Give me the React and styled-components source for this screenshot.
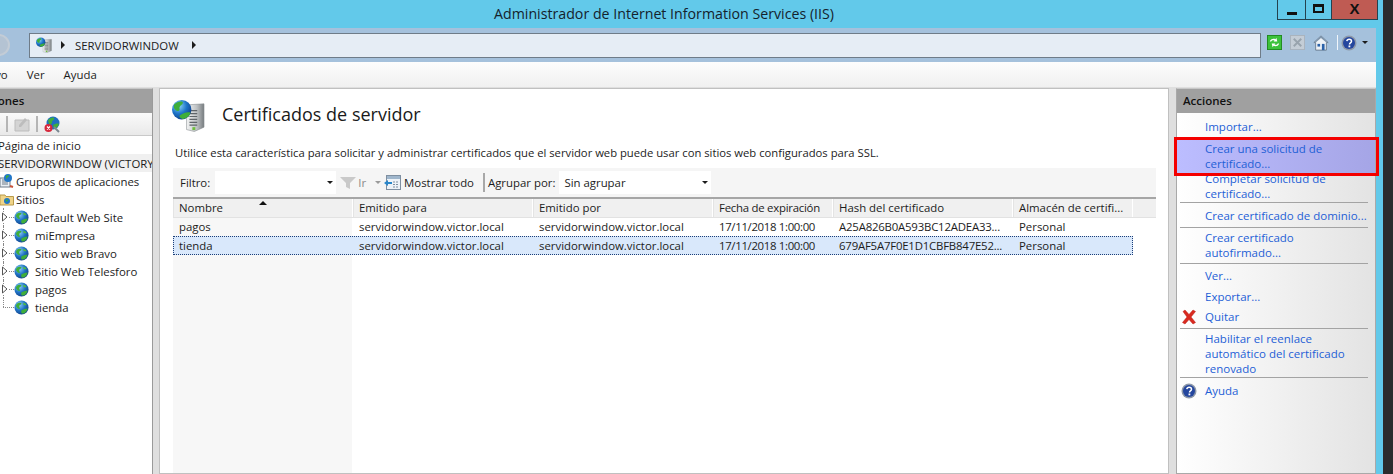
import React from 'react'
import styled, { createGlobalStyle } from 'styled-components'

const Global = createGlobalStyle`
  html, body { margin: 0; padding: 0; overflow: hidden; background: #2c2c2c; }
  * { box-sizing: border-box; }
  body { font-family: "Open Sans", "Noto Sans", sans-serif; font-size: 11.4px; color: #1c1c1c; }
`

const Globe = ({ size = 16, id = 'g' }) => (
  <svg width={size} height={size} viewBox="0 0 16 16">
    <defs>
      <radialGradient id={id} cx="35%" cy="30%" r="75%">
        <stop offset="0" stopColor="#8fd0f5" />
        <stop offset="0.55" stopColor="#1f72c4" />
        <stop offset="1" stopColor="#123f86" />
      </radialGradient>
    </defs>
    <circle cx="8" cy="8" r="7.5" fill={`url(#${id})`} />
    <path d="M3 4c2-1.500 4-1.500 5-.5 0 1.500-2 1.500-2.500 3S7 8.500 6 9.500 3 8 2 6.500zM8 11c2-1 4-2 6.500-2 -.5 3-3 5.500-5.500 5.500-1.500 0-1.500-2-1-3.500z" fill="#3fae3a" />
    <path d="M10 3c1.500 0 3 1 3.500 2.500-1 .5-2.500 0-3.500-.5z" fill="#4fbb45" />
  </svg>
)

const ServerGlobe = ({ size = 16, id = 'sg' }) => (
  <svg width={size} height={size} viewBox="0 0 34 34">
    <defs>
      <linearGradient id={`${id}b`} x1="0" x2="1" y1="0" y2="0">
        <stop offset="0" stopColor="#f4f5f5" />
        <stop offset="0.6" stopColor="#bcc0c2" />
        <stop offset="1" stopColor="#777c7f" />
      </linearGradient>
      <radialGradient id={`${id}g`} cx="35%" cy="30%" r="75%">
        <stop offset="0" stopColor="#8fd8f8" />
        <stop offset="0.55" stopColor="#1d74c8" />
        <stop offset="1" stopColor="#11408a" />
      </radialGradient>
    </defs>
    <path d="M15 6L33 5v24l-10 4.500-8-2z" fill={`url(#${id}b)`} stroke="#8a8f92" strokeWidth=".6" />
    <path d="M18 12h8M18 15h8M18 18h8M18 21h8M18 24h8M18 27h8" stroke="#5f6569" strokeWidth="1.200" />
    <rect x="21" y="29" width="3" height="3" fill="#6fbf3f" />
    <circle cx="10" cy="11" r="10" fill={`url(#${id}g)`} />
    <path d="M2 6c3-3 7-4 9-3 1 2-2 3-3 5s1 3-1 4-4-1-5-3zM8 17c3-2 7-4 11-3-1 4-4 6.500-8 6.500-2-.5-4-2-3-3.500z" fill="#3fae3a" />
  </svg>
)

const Caret = styled.span`
  width: 0;
  height: 0;
  flex: none;
  border-left: ${p => (p.$small ? 3 : 4)}px solid transparent;
  border-right: ${p => (p.$small ? 3 : 4)}px solid transparent;
  border-top: ${p => (p.$small ? 3 : 4)}px solid ${p => p.$color || '#1c1c1c'};
`

const BreadArrow = styled.span`
  width: 0;
  height: 0;
  flex: none;
  border-top: 4px solid transparent;
  border-bottom: 4px solid transparent;
  border-left: 4px solid #1c1c1c;
`

const Screen = styled.div`
  width: 1393px;
  height: 474px;
  display: flex;
  overflow: hidden;
  background: #2c2c2c;
`
const Win = styled.div`
  position: relative;
  width: 1383px;
  background: #62c9ea;
  display: flex;
  flex-direction: column;
  padding-right: 7px;
`
const TitleBar = styled.div`
  height: 28px;
  flex: none;
  padding-right: 48px;
  display: flex;
  align-items: center;
  justify-content: center;
  font-size: 14.2px;
  color: #14222c;
  padding-bottom: 2px;
`
const Caption = styled.div`
  position: absolute;
  top: 0;
  right: 5px;
  display: flex;
  height: 20px;
  border: 1px solid #24424f;
  border-top: 0;
`
const CapBtn = styled.div`
  width: ${p => p.$w}px;
  display: flex;
  align-items: center;
  justify-content: center;
  background: ${p => p.$bg || '#62c9ea'};
  border-left: ${p => (p.$first ? 0 : '1px solid #24424f')};
`
const MinGlyph = styled.span`
  width: 10px;
  height: 3px;
  background: #111;
  margin-top: 7px;
`
const MaxGlyph = styled.span`
  width: 11px;
  height: 9px;
  border: 2px solid #111;
  border-top-width: 3px;
  margin-top: -2px;
`
const CloseGlyph = styled.span`
  font-family: "Liberation Sans", sans-serif;
  font-weight: 700;
  font-size: 15px;
  line-height: 1;
  color: #111;
  margin-top: -3px;
`
const NavBar = styled.div`
  height: 34px;
  flex: none;
  background: #a5c1dc;
  display: flex;
  align-items: center;
  overflow: hidden;
`
const BackBall = styled.div`
  width: 22px;
  height: 22px;
  margin-left: -12px;
  margin-right: 19px;
  flex: none;
  border-radius: 50%;
  background: #b4c3d3;
  border: 2px solid #c3ccd6;
`
const Address = styled.div`
  width: 1232px;
  height: 25px;
  flex: none;
  background: #e6edf5;
  border: 1px solid #6f7c88;
  display: flex;
  align-items: center;
  padding-left: 6px;
  gap: 9px;
`
const AddressText = styled.span`
  font-size: 11.4px;
  margin: 0 4px 0 1px;
`
const NavTools = styled.div`
  display: flex;
  align-items: center;
  margin: -5px 0 0 6px;
`
const NavSlot = styled.span`
  display: flex;
  align-items: center;
  width: ${p => p.$w}px;
  flex: none;
  margin-right: ${p => p.$mr || 0}px;
`
const ToolDivider = styled.span`
  width: 1px;
  height: 15px;
  background: #f0f5fa;
`
const MenuBar = styled.div`
  height: 25px;
  flex: none;
  background: linear-gradient(#fdfdfd, #f0f0f0);
  display: flex;
  align-items: center;
  gap: 19px;
  margin-left: -32px;
`
const Panels = styled.div`
  flex: 1;
  min-height: 0;
  display: flex;
  background: #dfdfdf;
  padding-top: 1px;
`
const LeftPanel = styled.div`
  width: 153px;
  flex: none;
  border-right: 1px solid #9a9a9a;
  background: #fff;
  overflow: hidden;
  border-top: 1px solid #c8c8c8;
`
const PanelHead = styled.div`
  height: 24px;
  background: #a0a0a0;
  color: #111;
  font-weight: 600;
  font-size: 11.5px;
  line-height: 24px;
  padding-left: ${p => p.$pad || 0}px;
  text-indent: ${p => p.$indent || 0}px;
  white-space: nowrap;
`
const LeftTools = styled.div`
  height: 23px;
  background: linear-gradient(#fafafa, #e9e9e9);
  border-bottom: 1px solid #c9c9c9;
  display: flex;
  align-items: center;
  gap: 4px;
  margin-left: -16px;
`
const ToolSep = styled.span`
  width: 2px;
  height: 16px;
  background: #b5b5b5;
  margin: 0 2px;
`
const Tree = styled.div`
  margin-left: -20px;
  width: 172px;
`
const TreeRow = styled.div`
  height: 18px;
  display: flex;
  align-items: center;
  white-space: nowrap;
  padding-left: ${p => p.$pad}px;
  background: ${p => (p.$sel ? '#f0f0f0' : 'transparent')};
`
const SiteRow = styled(TreeRow)`
  position: relative;
  &::before {
    content: '';
    position: absolute;
    left: 23px;
    top: 0;
    height: ${p => (p.$last ? '50%' : '100%')};
    border-left: 1px dotted #888;
  }
`
const TreeLabel = styled.span`
  margin-left: ${p => p.$ml}px;
`
const ExpanderSvg = styled.svg`
  flex: none;
  position: relative;
  background: #fff;
  margin-right: 1px;
`
const Expander = () => (
  <ExpanderSvg width="6" height="10" viewBox="0 0 6 10">
    <path d="M.5 1v8L5 5z" fill="#fff" stroke="#555" />
  </ExpanderSvg>
)
const Dots = styled.span`
  width: ${p => p.$w}px;
  flex: none;
  border-top: 1px dotted #888;
`
const Center = styled.div`
  margin-left: 6px;
  width: 1010px;
  flex: none;
  background: #fff;
  border: 1px solid #c0c0c0;
  display: flex;
  flex-direction: column;
  padding: 0 12px 0 13px;
`
const Heading = styled.div`
  height: 53px;
  flex: none;
  display: flex;
  align-items: center;
  gap: 17px;
  margin-left: -1px;
`
const HeadingText = styled.h1`
  margin: -3px 0 0;
  font-size: 18px;
  font-weight: 400;
  color: #1a1a1a;
`
const Intro = styled.div`
  height: 26px;
  flex: none;
  padding: 3px 0 0 2px;
  white-space: nowrap;
  font-size: 11.25px;
`
const FilterBar = styled.div`
  height: 29px;
  flex: none;
  background: #f5f5f5;
  display: flex;
  align-items: center;
  padding-left: 7px;
`
const FilterLabel = styled.span`
  white-space: nowrap;
  color: ${p => (p.$muted ? '#8a8a8a' : 'inherit')};
  margin-left: ${p => p.$ml || 0}px;
`
const Spacer = styled.span`
  width: ${p => p.$w}px;
  flex: none;
`
const Combo = styled.div`
  width: ${p => p.$w}px;
  height: 23px;
  flex: none;
  margin-left: ${p => p.$ml}px;
  background: #fff;
  display: flex;
  align-items: center;
  justify-content: space-between;
  padding: 0 3px 0 5px;
`
const Divider = styled.span`
  width: 2px;
  height: 19px;
  background: #a8a8a8;
  margin: 0 3px 0 9px;
`
const HeadRow = styled.div`
  height: 21px;
  flex: none;
  display: flex;
  background: #f0f0f0;
  border-top: 2px solid #a6a6a6;
  border-bottom: 1px solid #e2e2e2;
`
const HeadCell = styled.div`
  width: ${p => p.$w}px;
  flex: none;
  padding-left: 5px;
  line-height: 18px;
  white-space: nowrap;
  letter-spacing: ${p => p.$ls || 0}px;
  border-right: 1px solid #fff;
  border-left: 1px solid #e4e4e4;
  position: relative;
`
const SortMark = styled.span`
  position: absolute;
  left: 85px;
  top: 2px;
  border-left: 4px solid transparent;
  border-right: 4px solid transparent;
  border-bottom: 4px solid #111;
`
const ListBody = styled.div`
  flex: 1;
  position: relative;
  background: linear-gradient(to right, #f7f7f7 179px, #fff 179px);
`
const Row = styled.div`
  height: ${p => (p.$sel ? 19 : 18)}px;
  width: 960px;
  display: flex;
  align-items: center;
  padding-bottom: ${p => (p.$sel ? 0 : 1)}px;
  background: ${p => (p.$sel ? '#d9e8fb' : 'transparent')};
  outline: ${p => (p.$sel ? '1px dotted #1c3f78' : 'none')};
  outline-offset: -1px;
`
const Cell = styled.div`
  width: ${p => p.$w}px;
  flex: none;
  padding-left: 6px;
  white-space: nowrap;
  overflow: hidden;
  letter-spacing: ${p => p.$ls || 0}px;
`
const RightPanel = styled.div`
  margin-left: 7px;
  width: 200px;
  flex: none;
  border: 1px solid #a9a9a9;
  border-top-color: #c8c8c8;
  background: linear-gradient(to right, #fff, #e3e3e3);
  position: relative;
  overflow: hidden;
`
const ActionList = styled.div`
  padding: 6px 7px 0 0;
`
const Action = styled.div`
  padding-left: 28px;
  line-height: 15px;
  margin-top: ${p => p.$mt || 0}px;
  color: #1f5fd6;
  position: relative;
  font-size: 11.5px;
  white-space: nowrap;
  background: ${p => (p.$hot ? 'linear-gradient(to right, #bcbdff, #a5a5e6)' : 'transparent')};
  margin-right: ${p => (p.$hot ? -7 : 0)}px;
  padding-top: ${p => (p.$hot ? 3 : 0)}px;
  padding-bottom: ${p => (p.$hot ? 3 : 0)}px;
`
const ActionIcon = styled.span`
  position: absolute;
  left: 4px;
  top: 0;
  display: flex;
`
const Rule = styled.div`
  height: 1px;
  background: #a3a3a3;
  margin: ${p => p.$t}px 0 ${p => p.$b}px 3px;
`
const RedBox = styled.div`
  position: absolute;
  left: 1174px;
  top: 137px;
  width: 205px;
  height: 39px;
  border: 3px solid #f40000;
  pointer-events: none;
`

const HelpIcon = ({ size = 16 }) => (
  <svg width={size} height={size} viewBox="0 0 16 16">
    <circle cx="8" cy="8" r="7.500" fill="#8d98a8" />
    <circle cx="8" cy="8" r="6" fill="#24469e" />
    <path d="M5.800 6.200C6 4.800 7 4.300 8.200 4.300c1.400 0 2.300.8 2.300 1.900 0 1.600-2 1.700-2 3.200" fill="none" stroke="#fff" strokeWidth="1.500" />
    <rect x="7.500" y="10.500" width="1.800" height="1.800" fill="#fff" />
  </svg>
)

const DeleteX = () => (
  <svg width="16" height="16" viewBox="0 0 16 16">
    <path d="M2 2.500L4 1l4 4.500L12 1l2.500 1.500L10 8l4.500 5.500L12 15 8 10.500 4 15l-2.500-1.500L6 8z" fill="#d92a20" stroke="#b81c14" strokeWidth=".5" />
  </svg>
)

const RefreshIcon = () => (
  <svg width="15" height="15" viewBox="0 0 16 16">
    <rect x=".5" y=".5" width="15" height="15" fill="#3cc23c" stroke="#1e8a1e" />
    <path d="M3 7c1-3 4-3.500 6-2.500L10 3l1 4-4 0 1-1c-1-.5-3-.5-3.500 1zM13 9c-1 3-4 3.500-6 2.500L6 13l-1-4 4 0-1 1c1 .5 3 .5 3.500-1z" fill="#fff" />
  </svg>
)

const StopIcon = () => (
  <svg width="15" height="15" viewBox="0 0 16 16">
    <rect x=".5" y=".5" width="15" height="15" fill="#c4cdd6" stroke="#a9b3bd" />
    <path d="M4 4l8 8M12 4l-8 8" stroke="#98a3ad" strokeWidth="2" />
  </svg>
)

const HomeIcon = () => (
  <svg width="16" height="16" viewBox="0 0 18 18">
    <path d="M9 1L1 8.500h2V17h12V8.500h2z" fill="#eef2f6" stroke="#5e6f80" strokeWidth=".9" />
    <path d="M9 1L1 8.500h2L9 3.500l6 5h2z" fill="#7d95ad" />
    <rect x="10" y="10" width="3" height="7" fill="#2b62a8" />
    <rect x="5" y="10" width="3" height="3" fill="#2b62a8" />
  </svg>
)

const Funnel = () => (
  <svg width="16" height="14" viewBox="0 0 16 14">
    <path d="M0 1h16l-6 6v6l-4-2V7z" fill="#c9c9c9" />
  </svg>
)

const ShowAllIcon = () => (
  <svg width="17" height="17" viewBox="0 0 17 17">
    <rect x="2.500" y="1.500" width="14" height="14" fill="#eef3f8" stroke="#7f8fa0" />
    <rect x="3" y="2" width="13" height="3" fill="#9fb6cc" />
    <path d="M9 8h6M9 10.500h6M9 13h6" stroke="#7f8fa0" strokeDasharray="2 1" />
    <path d="M0 9l4-3v2h4v2H4v2z" fill="#2a86c9" />
  </svg>
)

const DocIcon = () => (
  <svg width="16" height="16" viewBox="0 0 16 16">
    <path d="M1 4h14v11H1z" fill="#d4d4d4" stroke="#bcbcbc" />
    <path d="M5 9l6-7 2 2-6 7H5z" fill="#bdbdbd" />
  </svg>
)

const GlobeStop = () => (
  <svg width="17" height="17" viewBox="0 0 17 17">
    <circle cx="9" cy="7" r="6.500" fill="#1f6fc0" />
    <path d="M4 4c2-2 5-3 6-2 1 2-2 2-2 4s-2 3-3 2zM9 9c2-1 4-2 6-1-1 3-3 5-5 4.500z" fill="#3fae3a" />
    <path d="M10 11l5 5" stroke="#7a8791" strokeWidth="2" />
    <circle cx="4.500" cy="12" r="4" fill="#d6283c" />
    <path d="M3 10.500l3 3M6 10.500l-3 3" stroke="#fff" strokeWidth="1.200" />
  </svg>
)

const AppPoolIcon = () => (
  <svg width="14" height="16" viewBox="0 0 14 16">
    <rect x="0" y="5" width="10" height="9" fill="#e9eef3" stroke="#6c7a88" />
    <path d="M2 7h6M2 9h6M2 11h6" stroke="#6c7a88" />
    <circle cx="8" cy="5" r="4" fill="#2277c8" />
    <path d="M6 3c1-1 3-1 3 0s-2 1-2 2-1 1-1 0z" fill="#3fae3a" />
    <path d="M10 13l3 1" stroke="#c9533a" strokeWidth="2" />
  </svg>
)

const FolderIcon = () => (
  <svg width="14" height="16" viewBox="0 0 14 16">
    <path d="M0 4h5l1 1.500h7.500V14H0z" fill="#f0d488" stroke="#b89a4a" />
    <circle cx="7" cy="10" r="3" fill="#2277c8" />
    <path d="M5.500 9c1-1 3-.5 2.500.5S6.500 11 6 10.500z" fill="#3fae3a" />
  </svg>
)

const widths = [180, 180, 180, 120, 180, 120]
const headers = ['Nombre', 'Emitido para', 'Emitido por', 'Fecha de expiración', 'Hash del certificado', 'Almacén de certifi...']
const headSpacing = [0, 0, 0, -0.25, 0, 0]
const cellSpacing = [0, 0, 0, -0.33, -0.2, 0]
const rows = [
  ['pagos', 'servidorwindow.victor.local', 'servidorwindow.victor.local', '17/11/2018 1:00:00', 'A25A826B0A593BC12ADEA33...', 'Personal'],
  ['tienda', 'servidorwindow.victor.local', 'servidorwindow.victor.local', '17/11/2018 1:00:00', '679AF5A7F0E1D1CBFB847E52...', 'Personal'],
]
const sites = ['Default Web Site', 'miEmpresa', 'Sitio web Bravo', 'Sitio Web Telesforo', 'pagos']

export default function App() {
  return (
    <Screen>
      <Global />
      <Win>
        <TitleBar>Administrador de Internet Information Services (IIS)</TitleBar>
        <Caption>
          <CapBtn $w={27} $first><MinGlyph /></CapBtn>
          <CapBtn $w={26}><MaxGlyph /></CapBtn>
          <CapBtn $w={46} $bg="#bf5b53"><CloseGlyph>X</CloseGlyph></CapBtn>
        </Caption>
        <NavBar>
          <BackBall />
          <Address>
            <ServerGlobe size={16} id="nav" />
            <BreadArrow />
            <AddressText>SERVIDORWINDOW</AddressText>
            <BreadArrow />
          </Address>
          <NavTools>
            <NavSlot $w={15} $mr={8}><RefreshIcon /></NavSlot>
            <NavSlot $w={15} $mr={8}><StopIcon /></NavSlot>
            <NavSlot $w={16} $mr={8}><HomeIcon /></NavSlot>
            <NavSlot $w={1} $mr={3}><ToolDivider /></NavSlot>
            <NavSlot $w={16} $mr={5}><HelpIcon /></NavSlot>
            <Caret $small />
          </NavTools>
        </NavBar>
        <MenuBar>
          <span>Archivo</span>
          <span>Ver</span>
          <span>Ayuda</span>
        </MenuBar>
        <Panels>
          <LeftPanel>
            <PanelHead $indent={-40}>Conexiones</PanelHead>
            <LeftTools>
              <DocIcon />
              <ToolSep />
              <DocIcon />
              <ToolSep />
              <GlobeStop />
            </LeftTools>
            <Tree>
              <TreeRow $pad={18}>Página de inicio</TreeRow>
              <TreeRow $pad={18} $sel>SERVIDORWINDOW (VICTORY\Administrador)</TreeRow>
              <TreeRow $pad={20}><AppPoolIcon /><TreeLabel $ml={2}>Grupos de aplicaciones</TreeLabel></TreeRow>
              <TreeRow $pad={20}><FolderIcon /><TreeLabel $ml={2}>Sitios</TreeLabel></TreeRow>
              {sites.map((s, i) => (
                <SiteRow key={s} $pad={22}>
                  <Expander />
                  <Dots $w={5} />
                  <Globe size={15} id={`site${i}`} />
                  <TreeLabel $ml={6}>{s}</TreeLabel>
                </SiteRow>
              ))}
              <SiteRow $pad={23} $last>
                <Dots $w={11} />
                <Globe size={15} id="site-t" />
                <TreeLabel $ml={6}>tienda</TreeLabel>
              </SiteRow>
            </Tree>
          </LeftPanel>
          <Center>
            <Heading>
              <ServerGlobe size={33} id="big" />
              <HeadingText>Certificados de servidor</HeadingText>
            </Heading>
            <Intro>Utilice esta característica para solicitar y administrar certificados que el servidor web puede usar con sitios web configurados para SSL.</Intro>
            <FilterBar>
              <FilterLabel>Filtro:</FilterLabel>
              <Combo $w={121} $ml={5}><span /><Caret $small /></Combo>
              <Spacer $w={4} />
              <Funnel />
              <FilterLabel $muted $ml={2}>Ir</FilterLabel>
              <Spacer $w={9} />
              <Caret $small $color="#9a9a9a" />
              <Spacer $w={3} />
              <ShowAllIcon />
              <FilterLabel $ml={3}>Mostrar todo</FilterLabel>
              <Divider />
              <FilterLabel>Agrupar por:</FilterLabel>
              <Combo $w={152} $ml={4}>Sin agrupar<Caret $small /></Combo>
            </FilterBar>
            <HeadRow>
              {headers.map((h, i) => (
                <HeadCell key={h} $w={widths[i]} $ls={headSpacing[i]}>
                  {h}
                  {i === 0 && <SortMark />}
                </HeadCell>
              ))}
            </HeadRow>
            <ListBody>
              {rows.map(r => (
                <Row key={r[0]} $sel={r[0] === 'tienda'}>
                  {r.map((c, i) => <Cell key={i} $w={widths[i]} $ls={cellSpacing[i]}>{c}</Cell>)}
                </Row>
              ))}
            </ListBody>
          </Center>
          <RightPanel>
            <PanelHead $pad={6}>Acciones</PanelHead>
            <ActionList>
              <Action>Importar...</Action>
              <Action $hot $mt={4}>Crear una solicitud de<br />certificado...</Action>
              <Action $mt={-3}>Completar solicitud de<br />certificado...</Action>
              <Rule $t={1} $b={5} />
              <Action>Crear certificado de dominio...</Action>
              <Rule $t={4} $b={2} />
              <Action>Crear certificado<br />autofirmado...</Action>
              <Rule $t={3} $b={4} />
              <Action>Ver...</Action>
              <Action $mt={6}>Exportar...</Action>
              <Action $mt={5}><ActionIcon><DeleteX /></ActionIcon>Quitar</Action>
              <Rule $t={4} $b={2} />
              <Action>Habilitar el reenlace<br />automático del certificado<br />renovado</Action>
              <Rule $t={1} $b={5} />
              <Action><ActionIcon><HelpIcon /></ActionIcon>Ayuda</Action>
            </ActionList>
          </RightPanel>
        </Panels>
        <RedBox />
      </Win>
    </Screen>
  )
}
